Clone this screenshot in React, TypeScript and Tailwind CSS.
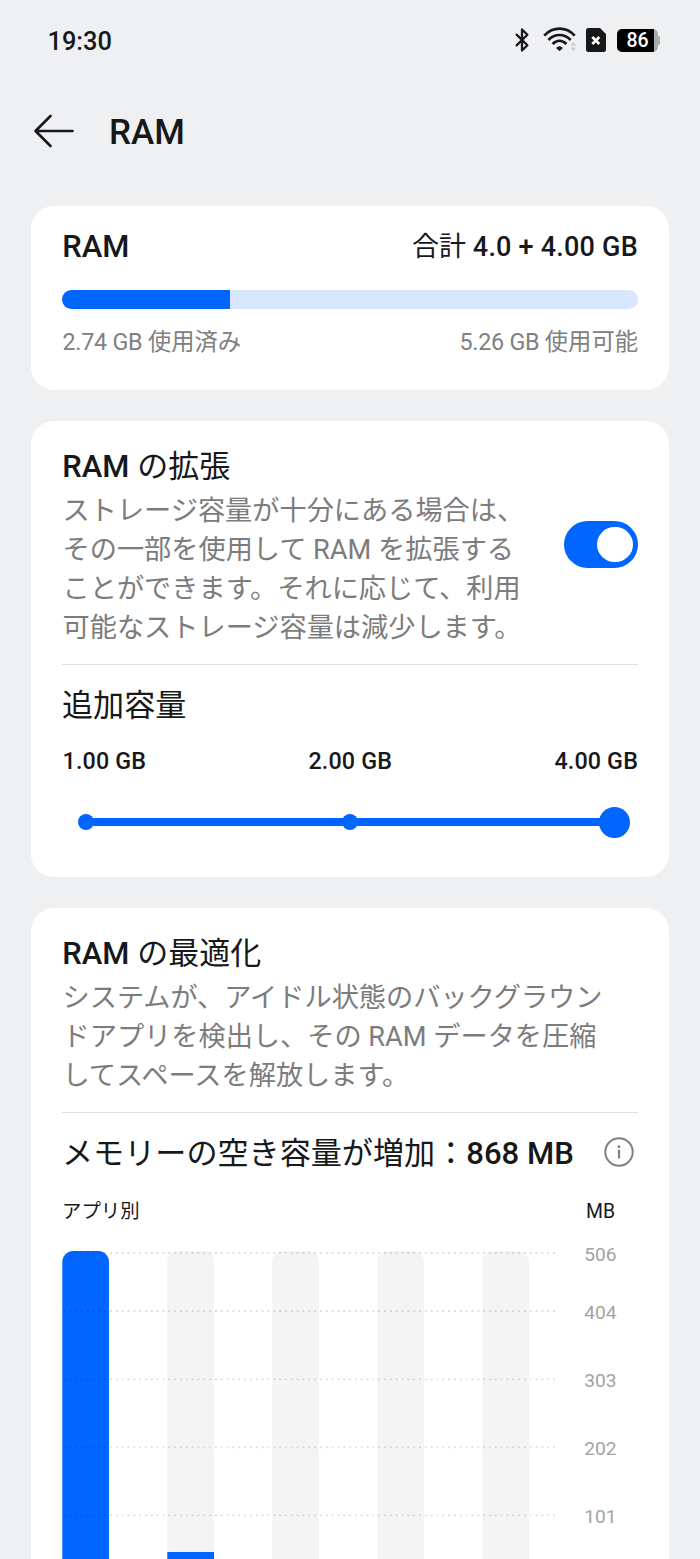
import React, { useState } from "react";

interface AppUsage {
  value: number;
  top: number;
}

interface GridLine {
  label: string;
  y: number;
}

const usages: AppUsage[] = [
  { value: 506, top: 0 },
  { value: 45, top: 301 },
  { value: 0, top: 400 },
  { value: 0, top: 400 },
  { value: 0, top: 400 },
];

const gridLines: GridLine[] = [
  { label: "506", y: 2 },
  { label: "404", y: 60 },
  { label: "303", y: 128.3 },
  { label: "202", y: 196.3 },
  { label: "101", y: 264.3 },
];

const StatusBar: React.FC = () => (
  <div className="flex h-20 items-center justify-between pr-10 pl-[47.5px]">
    <span className="mt-1 text-[25.4px] leading-none font-medium">19:30</span>
    <div className="flex items-center">
      {/* Bluetooth */}
      <svg width="16" height="26" viewBox="0 0 16 26" fill="none" stroke="#17181a" strokeWidth="2.3" strokeLinejoin="round" strokeLinecap="round">
        <path d="M2.6 7.6 13.4 18.2 8 23.5V2.5L13.4 7.8 2.6 18.4" />
      </svg>
      {/* Wi-Fi */}
      <svg className="ml-[13px]" width="34" height="26" viewBox="0 0 34 26" fill="none" stroke="#17181a" strokeWidth="2.7">
        <path d="M1.3 8.6C10 -.6 23 -.6 31.7 8.6" />
        <path d="M5.4 13C11.8 6.3 21.2 6.3 27.6 13" />
        <path d="M9.6 17C13.8 12.8 19.2 12.8 23.4 17" />
        <path d="M13.6 20.9c1.8-1.4 4-1.4 5.800 0L16.5 23.8z" fill="#17181a" strokeWidth="1" strokeLinejoin="round" />
        <path d="M27.5 18.6 30.3 15l2.8 3.6zM27.5 20.6l2.8 3.6 2.8-3.6z" fill="#c9cacc" stroke="none" />
      </svg>
      {/* SIM */}
      <svg className="ml-[9.5px]" width="20" height="24" viewBox="0 0 20 24">
        <path d="M2.5 0H14l6 6v15.5a2.5 2.5 0 0 1-2.5 2.5h-15A2.5 2.5 0 0 1 0 21.5v-19A2.5 2.5 0 0 1 2.5 0z" fill="#17181a" />
        <path d="m6.3 9 7 7m0-7-7 7" stroke="#fff" strokeWidth="2.6" />
      </svg>
      {/* Battery */}
      <div className="ml-[11px] flex items-center">
        <div className="flex h-[23px] w-[41px] items-center justify-center overflow-hidden rounded-[5px] bg-[linear-gradient(to_right,#000_37px,#a9aaab_37px)] pt-px text-[19.5px] leading-none font-medium text-white">
          86
        </div>
        <div className="h-[9px] w-[2px] rounded-r-sm bg-[#a9aaab]" />
      </div>
    </div>
  </div>
);

const Card: React.FC<{ className: string; children: React.ReactNode }> = ({ className, children }) => (
  <section className={`rounded-[23px] bg-white px-[31px] ${className}`}>{children}</section>
);

const Slider: React.FC = () => (
  <div className="mt-[29px] flex h-[31px] items-center pr-[8px] pl-[15.5px]">
    <div className="size-4 rounded-full bg-[#0066ff]" />
    <div className="-mx-px h-2 w-[250px] bg-[#0066ff]" />
    <div className="size-4 rounded-full bg-[#0066ff]" />
    <div className="-mx-px h-2 flex-1 bg-[#0066ff]" />
    <div className="size-[31px] rounded-full bg-[#0066ff]" />
  </div>
);

const UsageChart: React.FC = () => (
  <svg className="mt-6 block overflow-visible" width="576" height="400">
    {usages.map((usage, i) => (
      <g key={i}>
        <rect x={0.3 + i * 105} y="0" width="46.7" height="420" rx="11" fill="#f4f4f4" />
        {usage.value > 0 && (
          <rect x={0.3 + i * 105} y={usage.top} width="46.7" height="420" rx={usage.top === 0 ? 11 : 0} fill="#0066ff" />
        )}
      </g>
    ))}
    {gridLines.map((line) => (
      <g key={line.label}>
        <line x1="1.4" x2="494.5" y1={line.y} y2={line.y} stroke="#000" strokeOpacity="0.13" strokeWidth="1.8" strokeDasharray="1.9 3.93" />
        <text x="522.3" y={line.y + 7.6} fontSize="19.2" fill="#a3a3a3">
          {line.label}
        </text>
      </g>
    ))}
  </svg>
);

const App: React.FC = () => {
  const [enabled, setEnabled] = useState(true);

  return (
    <div className="h-[1559px] w-[700px] overflow-hidden bg-[#eff0f2] font-[Roboto,'Noto_Sans_CJK_JP',sans-serif] text-[#17181a]">
      <StatusBar />

      {/* Header */}
      <header className="flex h-[102px] items-center pl-[33px]">
        <svg width="41" height="34" viewBox="0 0 41 34" fill="none" stroke="#17181a" strokeWidth="2.6" strokeLinecap="round" strokeLinejoin="round">
          <path d="M17.5 2 2.5 17l15 15M2.5 17h37" />
        </svg>
        <h1 className="mt-0.5 ml-[35px] text-[35px] leading-none font-medium">RAM</h1>
      </header>

      <main className="mt-[23.6px] flex flex-col gap-[31px] px-[31px]">
        {/* Memory usage */}
        <Card className="h-[184px] pt-5">
          <div className="flex h-[42px] items-center justify-between font-medium">
            <h2 className="pl-[0.3px] text-[31px] leading-[42px]">RAM</h2>
            <span className="text-[27px] leading-[42px]">
              <span className="font-normal">合計</span>
              <span className="tracking-[0.22px]"> 4.0 + 4.00 GB</span>
            </span>
          </div>
          <div className="mt-[22px] h-[19.5px] overflow-hidden rounded-full bg-[#d9e7fe]">
            <div className="h-full w-[29.1%] bg-[#0066ff]" />
          </div>
          <div className="mt-4 flex justify-between text-[23.3px] leading-[34px] text-[#808080]">
            <span className="pl-[0.5px]">
              <span className="tracking-[-0.25px]">2.74 GB </span>使用済み
            </span>
            <span>
              <span className="tracking-[-0.25px]">5.26 GB </span>使用可能
            </span>
          </div>
        </Card>

        {/* Memory expansion */}
        <Card className="h-[456px] pt-[25px]">
          <div className="flex items-center justify-between">
            <div className="w-[470px]">
              <h2 className="pl-[0.3px] text-[31px] leading-[42px] font-medium">
                RAM <span className="font-normal">の拡張</span>
              </h2>
              <p className="relative top-1 pl-[0.5px] text-[27.2px] leading-[39px] whitespace-nowrap text-[#7c7c7c]">
                ストレージ容量が十分にある場合は、
                <br />
                その一部を使用して RAM を拡張する
                <br />
                ことができます。それに応じて、利用
                <br />
                可能なストレージ容量は減少します。
              </p>
            </div>
            <button
              type="button"
              role="switch"
              aria-checked={enabled}
              onClick={() => setEnabled(!enabled)}
              className={`flex h-[47px] w-[74px] items-center rounded-full px-[5.5px] ${enabled ? "justify-end bg-[#0066ff]" : "justify-start bg-gray-300"}`}
            >
              <span className="size-[35.5px] rounded-full bg-white" />
            </button>
          </div>
          <div className="mt-5 h-px bg-[#dedede]" />
          <h3 className="mt-5 text-[31.1px] leading-[42px]">追加容量</h3>
          <div className="mt-[17px] flex justify-between text-[23.3px] leading-[34px] font-medium tracking-[0.15px]">
            <span className="pl-[0.5px]">1.00 GB</span>
            <span>2.00 GB</span>
            <span>4.00 GB</span>
          </div>
          <Slider />
        </Card>

        {/* Memory optimization */}
        <Card className="h-[720px] pt-[25px]">
          <h2 className="pl-[0.3px] text-[31px] leading-[42px] font-medium">
            RAM <span className="font-normal">の最適化</span>
          </h2>
          <p className="relative top-1 pl-[0.5px] text-[27.2px] leading-[39px] whitespace-nowrap text-[#7c7c7c]">
            システムが、アイドル状態のバックグラウン
            <br />
            ドアプリを検出し、その RAM データを圧縮
            <br />
            してスペースを解放します。
          </p>
          <div className="mt-5 h-px bg-[#dedede]" />
          <div className="mt-5 flex h-[42px] items-center justify-between pr-[4px]">
            <h3 className="text-[31.1px] leading-[42px] font-medium whitespace-nowrap">
              <span className="font-normal">メモリーの空き容量が増加：</span>868 MB
            </h3>
            <svg className="mb-1" width="30" height="30" viewBox="0 0 30 30" fill="none" stroke="#808080">
              <circle cx="15" cy="15" r="13.7" strokeWidth="2" />
              <path d="M15 12.8v8.7" strokeWidth="2.2" />
              <circle cx="15" cy="9.7" r="1.4" fill="#808080" stroke="none" />
            </svg>
          </div>
          <div className="mt-[22px] flex justify-between pr-[23px] text-[19.4px] leading-[30px]">
            <span>アプリ別</span>
            <span>MB</span>
          </div>
          <UsageChart />
        </Card>
      </main>
    </div>
  );
};

export default App;
